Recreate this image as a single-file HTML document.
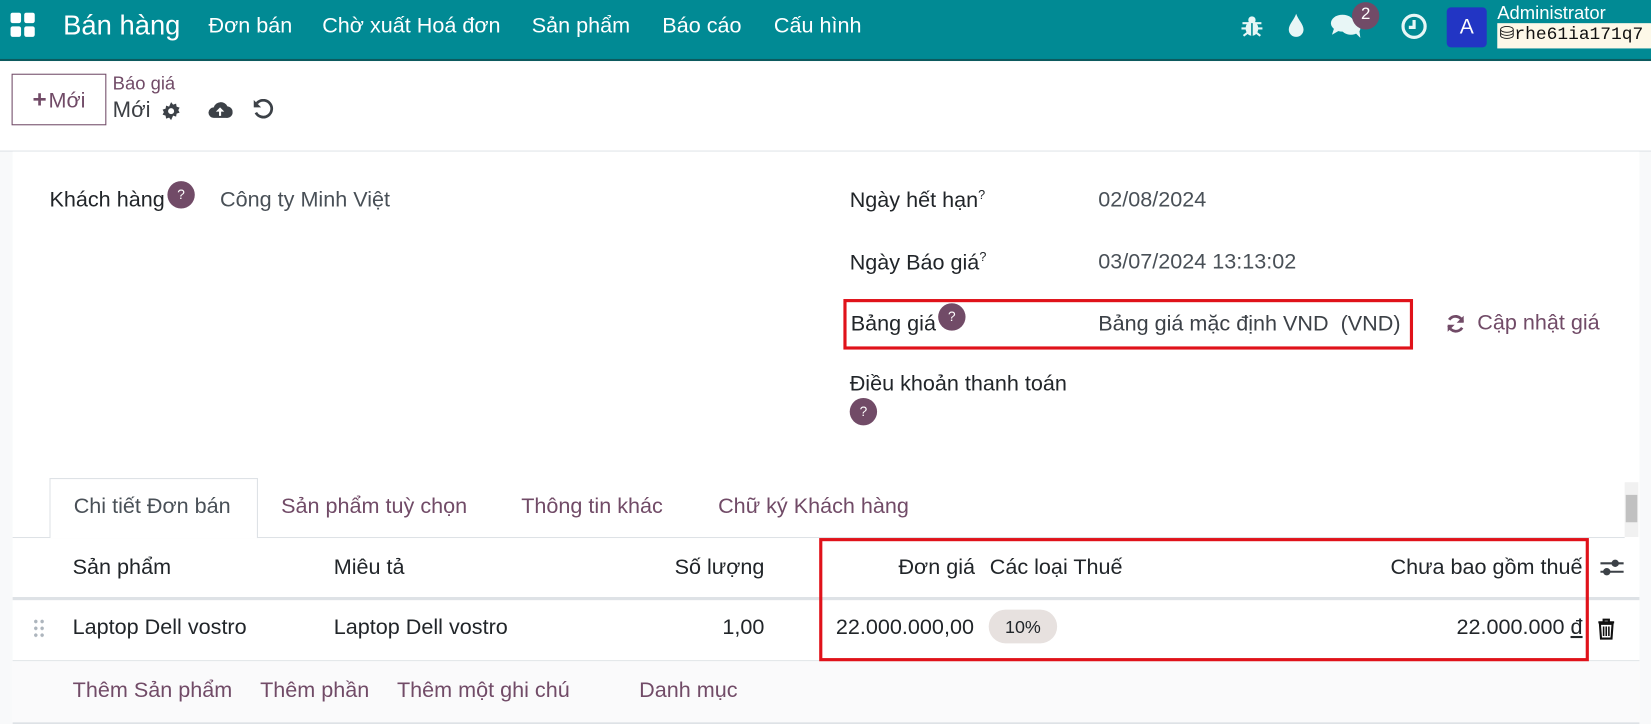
<!DOCTYPE html>
<html><head><meta charset="utf-8">
<style>
*{box-sizing:border-box;margin:0;padding:0}
html,body{width:1651px;height:724px;overflow:hidden;background:#f8f9fa}
#w{position:absolute;left:0;top:0;width:1568px;height:688px;transform:scale(1.05293);transform-origin:0 0;font-family:"Liberation Sans","Noto Sans CJK SC",sans-serif;color:#212529;background:#f8f9fa}
.a{position:absolute;white-space:nowrap}
.r{position:absolute;white-space:nowrap;text-align:right}
.nav{left:0;top:0;width:1568px;height:58px;background:#018a94;border-bottom:2px solid #0d5a5e}
.nt{color:#fff;font-size:20.5px;top:13px}
.cp{left:0;top:58px;width:1568px;height:86px;background:#fff;border-bottom:1px solid #dee2e6}
.sheet{left:12px;top:144px;width:1545px;height:544px;background:#fff}
.f{font-size:20.5px}
.q{display:inline-block;width:26px;height:26px;border-radius:50%;background:#714b67;color:#fff;font-size:13px;text-align:center;line-height:26px}
.p{color:#714b67}
.red{border:3px solid #e0121a}
</style></head><body><div id="w">
<div class="a nav"></div>
<svg class="a" style="left:10px;top:12px" width="24" height="24" viewBox="0 0 24 24" fill="#fff"><rect x="0" y="0" width="10" height="10" rx="2"/><rect x="13" y="0" width="10" height="10" rx="2"/><rect x="0" y="13" width="10" height="10" rx="2"/><rect x="13" y="13" width="10" height="10" rx="2"/></svg>
<div class="a nt" style="left:60px;top:9px;font-size:26px">Bán hàng</div>
<div class="a nt" style="left:198px">Đơn bán</div>
<div class="a nt" style="left:306px">Chờ xuất Hoá đơn</div>
<div class="a nt" style="left:505px">Sản phẩm</div>
<div class="a nt" style="left:629px">Báo cáo</div>
<div class="a nt" style="left:735px">Cấu hình</div>
<svg class="a" style="left:1179px;top:14px" width="20" height="22" viewBox="0 0 20 22" fill="#e8f6f6"><ellipse cx="10" cy="13" rx="6" ry="7"/><circle cx="10" cy="5" r="3.5"/><path d="M1 8h18M0 13h20M2 20l4-3M18 20l-4-3" stroke="#e8f6f6" stroke-width="2"/><path d="M10 8v12" stroke="#018a94" stroke-width="1.5"/></svg>
<svg class="a" style="left:1222px;top:12px" width="18" height="24" viewBox="0 0 18 24"><path d="M9 1C7 7 2 11 2 16a7 7 0 0014 0C16 11 11 7 9 1z" fill="#e8f6f6"/></svg>
<svg class="a" style="left:1263px;top:12px" width="32" height="26" viewBox="0 0 32 26" fill="#e8f6f6"><ellipse cx="12" cy="10" rx="11" ry="8"/><path d="M4 15l-2 6 7-4z"/><ellipse cx="20" cy="15" rx="9" ry="6"/><path d="M24 19l5 5-1-7z"/></svg>
<div class="a" style="left:1284px;top:2px;width:26px;height:26px;border-radius:50%;background:#714b67;color:#fff;font-size:16px;text-align:center;line-height:24px">2</div>
<svg class="a" style="left:1330px;top:12px" width="26" height="26" viewBox="0 0 26 26"><circle cx="13" cy="13" r="10.5" fill="none" stroke="#e8f6f6" stroke-width="3"/><path d="M13 7v7h-5" fill="none" stroke="#e8f6f6" stroke-width="3"/></svg>
<div class="a" style="left:1374px;top:7px;width:38px;height:38px;border-radius:4px;background:#2235c4;color:#fff;font-size:20px;text-align:center;line-height:38px">A</div>
<div class="a" style="left:1422px;top:2px;color:#fff;font-size:17.5px">Administrator</div>
<div class="a" style="left:1422px;top:22px;width:146px;height:24px;background:#fdf8e8;font-family:'Liberation Mono',monospace;font-size:17px;line-height:24px;color:#111;padding-left:2px">&#9921;rhe61ia171q7</div>

<div class="a cp"></div>
<div class="a" style="left:11px;top:70px;width:90px;height:49px;border:1px solid #714b67;color:#714b67;font-size:20.5px;line-height:47px;text-align:center"><b style="font-size:23px">+</b>&#8202;Mới</div>
<div class="a p" style="left:107px;top:69px;font-size:17.5px">Báo giá</div>
<div class="a" style="left:107px;top:93px;font-size:21px;color:#3c3f44">Mới</div>
<svg class="a" style="left:153px;top:96px" width="19" height="19" viewBox="0 0 20 20"><path d="M10 1l2 2.5 3-1 .5 3 3 1-1.3 2.5 1.3 2.5-3 1-.5 3-3-1L10 19l-2-2.5-3 1-.5-3-3-1L2.8 11 1.5 8.5l3-1 .5-3 3 1z" fill="#3c4147"/><circle cx="10" cy="10" r="3" fill="#fff"/></svg>
<svg class="a" style="left:197px;top:95px" width="24" height="18" viewBox="0 0 24 18"><path d="M6 17a5 5 0 010-10 7 7 0 0113-1 5.5 5.5 0 01-1 11z" fill="#3c4147"/><path d="M12 7l-4 4h3v4h2v-4h3z" fill="#fff"/></svg>
<svg class="a" style="left:240px;top:94px" width="20" height="20" viewBox="0 0 20 20"><path d="M4 4A8 8 0 1 1 3 13" fill="none" stroke="#3c4147" stroke-width="2.6"/><path d="M1 1v7h7z" fill="#3c4147"/></svg>

<div class="a sheet"></div>
<div class="a f" style="left:47px;top:178px">Khách hàng</div>
<div class="a q" style="left:159px;top:172px">?</div>
<div class="a f" style="left:209px;top:178px;color:#495057">Công ty Minh Việt</div>

<div class="a f" style="left:807px;top:178px">Ngày hết hạn<sup style="font-size:12px">?</sup></div>
<div class="a f" style="left:1043px;top:178px;color:#495057">02/08/2024</div>
<div class="a f" style="left:807px;top:237px">Ngày Báo giá<sup style="font-size:12px">?</sup></div>
<div class="a f" style="left:1043px;top:237px;color:#495057">03/07/2024 13:13:02</div>
<div class="a red" style="left:801px;top:284px;width:541px;height:48px"></div>
<div class="a f" style="left:808px;top:296px">Bảng giá</div>
<div class="a q" style="left:891px;top:288px">?</div>
<div class="a f" style="left:1043px;top:296px;color:#3c4147">Bảng giá mặc định VND&nbsp; (VND)</div>
<svg class="a" style="left:1373px;top:298px" width="19" height="19" viewBox="0 0 20 20"><path d="M17 8A7.5 7.5 0 0 0 3.5 6M3 12a7.5 7.5 0 0 0 13.5 2" fill="none" stroke="#714b67" stroke-width="2.8"/><path d="M18 2v7h-7zM2 18v-7h7z" fill="#714b67"/></svg>
<div class="a f p" style="left:1403px;top:295px">Cập nhật giá</div>
<div class="a f" style="left:807px;top:353px">Điều khoản thanh toán</div>
<div class="a q" style="left:807px;top:378px">?</div>

<div class="a" style="left:12px;top:510px;width:1531px;height:1px;background:#dee2e6"></div>
<div class="a" style="left:47px;top:454px;width:198px;height:57px;background:#fff;border:1px solid #dee2e6;border-bottom:none"></div>
<div class="a f" style="left:70px;top:469px;color:#495057">Chi tiết Đơn bán</div>
<div class="a f p" style="left:267px;top:469px">Sản phẩm tuỳ chọn</div>
<div class="a f p" style="left:495px;top:469px">Thông tin khác</div>
<div class="a f p" style="left:682px;top:469px">Chữ ký Khách hàng</div>
<div class="a" style="left:1543px;top:458px;width:13px;height:52px;background:#f1f1f1"></div>
<div class="a" style="left:1544px;top:470px;width:11px;height:26px;background:#c1c1c1"></div>

<div class="a" style="left:12px;top:567px;width:1545px;height:3px;background:#dee2e6"></div>
<div class="a" style="left:12px;top:627px;width:1545px;height:1px;background:#dee2e6"></div>
<div class="a" style="left:12px;top:628px;width:1545px;height:58px;background:#fafafb"></div>
<div class="a" style="left:12px;top:686px;width:1545px;height:2px;background:#dee2e6"></div>
<div class="a f" style="left:69px;top:527px">Sản phẩm</div>
<div class="a f" style="left:317px;top:527px">Miêu tả</div>
<div class="r f" style="right:842px;top:527px">Số lượng</div>
<div class="r f" style="right:642px;top:527px">Đơn giá</div>
<div class="a f" style="left:940px;top:527px">Các loại Thuế</div>
<div class="r f" style="right:65px;top:527px">Chưa bao gồm thuế</div>
<svg class="a" style="left:1519px;top:529px" width="24" height="20" viewBox="0 0 24 20"><path d="M1 6h22M1 14h22" stroke="#3c4147" stroke-width="2"/><circle cx="15" cy="6" r="3.5" fill="#3c4147"/><circle cx="7" cy="14" r="3.5" fill="#3c4147"/></svg>
<div class="a" style="left:31px;top:587px;width:12px;height:20px;background:radial-gradient(circle,#adb5bd 1.6px,transparent 1.8px) 0 0/6px 6.5px"></div>
<div class="a f" style="left:69px;top:584px">Laptop Dell vostro</div>
<div class="a f" style="left:317px;top:584px">Laptop Dell vostro</div>
<div class="r f" style="right:842px;top:584px">1,00</div>
<div class="r f" style="right:643px;top:584px">22.000.000,00</div>
<div class="a" style="left:939px;top:579px;width:65px;height:32px;border-radius:16px;background:#e7e1df;font-size:17px;text-align:center;line-height:34px">10%</div>
<div class="r f" style="right:65px;top:584px">22.000.000 <u>đ</u></div>
<svg class="a" style="left:1517px;top:587px" width="17" height="21" viewBox="0 0 17 21"><path d="M1 4h15M6 4V1.5h5V4" fill="none" stroke="#111" stroke-width="2"/><path d="M2.5 5.5h12l-1 14h-10z" fill="none" stroke="#111" stroke-width="2"/><path d="M6 8v9M8.5 8v9M11 8v9" stroke="#111" stroke-width="1.5"/></svg>
<div class="a red" style="left:778px;top:511px;width:731px;height:117px"></div>
<div class="a f p" style="left:69px;top:644px">Thêm Sản phẩm</div>
<div class="a f p" style="left:247px;top:644px">Thêm phần</div>
<div class="a f p" style="left:377px;top:644px">Thêm một ghi chú</div>
<div class="a f p" style="left:607px;top:644px">Danh mục</div>
</div></body></html>
